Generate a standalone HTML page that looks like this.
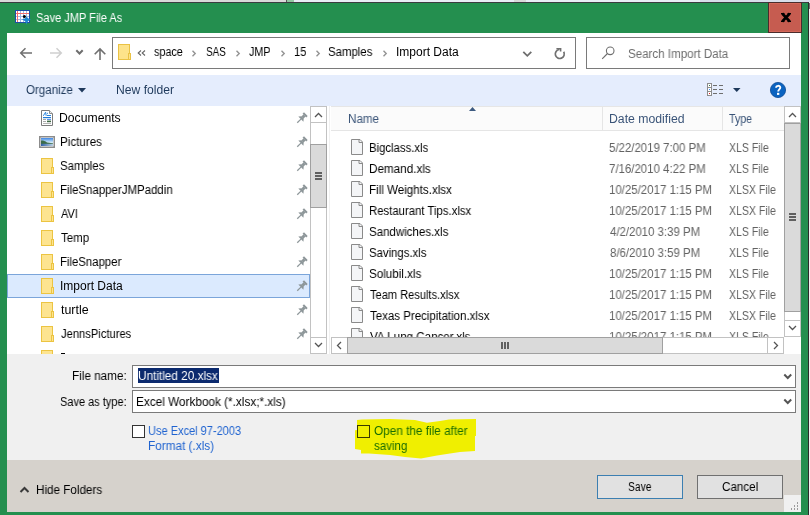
<!DOCTYPE html>
<html><head><meta charset="utf-8">
<style>
*{margin:0;padding:0;box-sizing:border-box}
html,body{width:810px;height:515px;overflow:hidden;background:#e9edf6;font-family:"Liberation Sans",sans-serif;font-size:12px;color:#000}
.a{position:absolute}
.t{position:absolute;white-space:nowrap;line-height:12px;font-size:12px;transform-origin:0 0;will-change:transform}
svg{position:absolute;overflow:visible}
.sb{position:absolute;background:#fff;border:1px solid #c2c2c2}
.thumb{position:absolute;background:#dadada;border:1px solid #a0a0a0}
</style></head><body>
<!-- top strip (background windows) -->
<div class="a" style="left:0;top:0;width:286px;height:2px;background:#d9d9d9"></div>
<div class="a" style="left:286px;top:0;width:1px;height:2px;background:#555"></div>
<div class="a" style="left:287px;top:0;width:7px;height:2px;background:#92c7a2"></div>
<div class="a" style="left:514px;top:0;width:12px;height:2px;background:#d9d9d9"></div>
<div class="a" style="left:700px;top:0;width:110px;height:2px;background:#d8deea"></div>
<!-- window frame -->
<div class="a" style="left:0;top:2px;width:809px;height:513px;background:#248f4f;border-top:1px solid #3b3b40;border-right:1px solid #2b2b2b"></div>
<div class="a" style="left:809px;top:2px;width:1px;height:513px;background:#f2f2f2"></div><div class="a" style="left:809px;top:3px;width:1px;height:6px;background:#707070"></div>
<!-- title icon -->
<svg style="left:15px;top:10px" width="15" height="13" viewBox="0 0 15 13">
  <rect x="0.5" y="0.5" width="14" height="12" fill="#fff" stroke="#1d4ea6"/>
  <g stroke="#9db8e6" stroke-width="1"><line x1="5.5" y1="1" x2="5.5" y2="12"/><line x1="8.5" y1="1" x2="8.5" y2="12"/><line x1="11.5" y1="1" x2="11.5" y2="12"/><line x1="1" y1="6.5" x2="14" y2="6.5"/><line x1="1" y1="9.5" x2="14" y2="9.5"/></g>
  <g stroke="#f26a6a" stroke-width="1"><line x1="2.5" y1="1" x2="2.5" y2="12"/><line x1="1" y1="3.5" x2="14" y2="3.5"/></g>
  <circle cx="9.4" cy="6.4" r="1.5" fill="#000"/>
  <path d="M6.9 9.4 Q10.8 8.6 11.6 6.4 Q12.4 8.6 16 9.4 Q12.4 10.2 11.6 14.8 Q10.8 10.2 6.9 9.4 Z" fill="#1e86cf"/>
</svg>
<!-- close button -->
<div class="a" style="left:768px;top:2px;width:34px;height:31px;background:#c65c50;border:1px solid #4a2c2c;box-shadow:inset 0 0 0 1px #d4685a"></div>
<svg style="left:781px;top:13px" width="10" height="9" viewBox="0 0 10 9"><path d="M1.2 0.5 L8.8 8.5 M8.8 0.5 L1.2 8.5" stroke="#000" stroke-width="2.6"/><path d="M0 0.5 H3.5 M6.5 0.5 H10 M0 8.5 H3.5 M6.5 8.5 H10" stroke="#000" stroke-width="1.2"/></svg>
<!-- content -->
<div class="a" style="left:7px;top:33px;width:794px;height:479px;background:#fff"></div>
<!-- nav buttons -->
<svg style="left:19px;top:47px" width="14" height="12" viewBox="0 0 14 12"><path d="M13 6 H2 M6.5 1.2 L1.7 6 L6.5 10.8" fill="none" stroke="#707070" stroke-width="1.5"/></svg>
<svg style="left:49px;top:47px" width="14" height="12" viewBox="0 0 14 12"><path d="M1 6 H12 M7.5 1.2 L12.3 6 L7.5 10.8" fill="none" stroke="#cfcfcf" stroke-width="1.5"/></svg>
<svg style="left:75px;top:49px" width="9" height="6" viewBox="0 0 9 6"><path d="M1.3 1.3 L4.5 4.5 L7.7 1.3" fill="none" stroke="#6e6e6e" stroke-width="2"/></svg>
<svg style="left:93px;top:47px" width="14" height="14" viewBox="0 0 14 14"><path d="M7 13 V2 M1.7 7.3 L7 2 L12.3 7.3" fill="none" stroke="#707070" stroke-width="1.6"/></svg>
<!-- address box -->
<div class="a" style="left:112px;top:37px;width:464px;height:32px;border:1px solid #7a7a7a"></div>
<svg style="left:118px;top:44px" width="14" height="16" viewBox="0 0 14 16">
  <rect x="0.5" y="0.5" width="11" height="15" fill="#fde38a" stroke="#eac244"/>
  <rect x="10.5" y="9.5" width="2" height="6" fill="#fde38a" stroke="#eac244"/>
</svg>
<svg style="left:137px;top:50px" width="9" height="6" viewBox="0 0 9 6"><path d="M4 0.5 L1.2 3 L4 5.5 M8 0.5 L5.2 3 L8 5.5" fill="none" stroke="#666" stroke-width="1.1"/></svg>
<svg style="left:191px;top:50px" width="6" height="7" viewBox="0 0 6 7"><path d="M1.5 0.8 L4.2 3.5 L1.5 6.2" fill="none" stroke="#939393" stroke-width="1.4"/></svg>
<svg style="left:235px;top:50px" width="6" height="7" viewBox="0 0 6 7"><path d="M1.5 0.8 L4.2 3.5 L1.5 6.2" fill="none" stroke="#939393" stroke-width="1.4"/></svg>
<svg style="left:280px;top:50px" width="6" height="7" viewBox="0 0 6 7"><path d="M1.5 0.8 L4.2 3.5 L1.5 6.2" fill="none" stroke="#939393" stroke-width="1.4"/></svg>
<svg style="left:315px;top:50px" width="6" height="7" viewBox="0 0 6 7"><path d="M1.5 0.8 L4.2 3.5 L1.5 6.2" fill="none" stroke="#939393" stroke-width="1.4"/></svg>
<svg style="left:382px;top:50px" width="6" height="7" viewBox="0 0 6 7"><path d="M1.5 0.8 L4.2 3.5 L1.5 6.2" fill="none" stroke="#939393" stroke-width="1.4"/></svg>
<svg style="left:522px;top:50px" width="11" height="8" viewBox="0 0 11 8"><path d="M1.3 1.8 L5.3 5.8 L9.3 1.8" fill="none" stroke="#6e6e6e" stroke-width="1.8"/></svg>
<svg style="left:553px;top:46px" width="14" height="14" viewBox="0 0 14 14"><path d="M10.7 5.75 A4.5 4.5 0 1 1 6.3 3.5" fill="none" stroke="#707070" stroke-width="1.7"/><path d="M3.4 2.7 H7.6 V5.4" fill="none" stroke="#707070" stroke-width="1.6"/></svg>
<!-- search box -->
<div class="a" style="left:586px;top:37px;width:204px;height:32px;border:1px solid #7a7a7a"></div>
<svg style="left:601px;top:46px" width="15" height="14" viewBox="0 0 15 14"><circle cx="9.2" cy="4.8" r="3.8" fill="none" stroke="#6e6e6e" stroke-width="1.1"/><path d="M6.5 7.5 L1.2 12.8" stroke="#6e6e6e" stroke-width="1.1"/></svg>
<!-- toolbar -->
<div class="a" style="left:7px;top:75px;width:794px;height:31px;background:#e5edfd"></div>
<svg style="left:78px;top:88px" width="8" height="5" viewBox="0 0 8 5"><path d="M0 0 H8 L4 4.5 Z" fill="#1e395b"/></svg>
<svg style="left:707px;top:83px" width="17" height="13" viewBox="0 0 17 13">
  <rect x="0.5" y="0.5" width="4" height="12" fill="#fff" stroke="#8c8c8c"/>
  <line x1="0.5" y1="4.5" x2="4.5" y2="4.5" stroke="#8c8c8c"/><line x1="0.5" y1="8.5" x2="4.5" y2="8.5" stroke="#8c8c8c"/>
  <rect x="2" y="2" width="1" height="1" fill="#3a7a4a"/><rect x="2" y="6" width="1" height="1" fill="#3d8ef0"/><rect x="2" y="10" width="1" height="1" fill="#e02020"/>
  <g stroke="#6e6e6e" stroke-width="1"><path d="M6 2.5 H10 M12 2.5 H16 M6 6.5 H10 M12 6.5 H16 M6 10.5 H10 M12 10.5 H16"/></g>
</svg>
<svg style="left:733px;top:88px" width="8" height="5" viewBox="0 0 8 5"><path d="M0 0 H7.5 L3.75 4 Z" fill="#1e395b"/></svg>
<svg style="left:770px;top:82px" width="16" height="16" viewBox="0 0 16 16"><circle cx="8" cy="8" r="7.6" fill="#0b63c0" stroke="#0c4a94" stroke-width="0.8"/><path d="M6.1 5.8 C6.1 3.2 10.3 3.2 10.3 5.6 C10.3 7.3 8.2 7.5 8.2 9.5" fill="none" stroke="#fff" stroke-width="1.9"/><rect x="7" y="10.8" width="2.3" height="2.1" fill="#fff"/></svg>

<!-- nav pane selection -->
<div class="a" style="left:7px;top:274px;width:303px;height:24px;background:#dbeafe;border:1px solid #7ba5da"></div>
<!-- nav icons -->
<svg style="left:41px;top:110px" width="13" height="16" viewBox="0 0 13 16">
  <path d="M0.5 0.5 H8.5 L11.5 3.5 V15.5 H0.5 Z" fill="#fff" stroke="#7c7c7c"/>
  <path d="M8.5 0.5 V3.5 H11.5" fill="#eee" stroke="#8c8c8c"/>
  <path d="M2.3 5.8 L4.6 2.2 L5.2 5.8" fill="none" stroke="#2a84dc" stroke-width="1"/>
  <rect x="6" y="2.8" width="1" height="1" fill="#2a84dc"/>
  <rect x="6" y="5" width="4" height="1" fill="#2a84dc"/>
  <rect x="2" y="7" width="8" height="1.2" fill="#1f7ad8"/>
  <rect x="2" y="9" width="3" height="1" fill="#a8a8a8"/><rect x="6" y="9" width="4" height="1" fill="#5b93e8"/>
  <rect x="2" y="11" width="3" height="1" fill="#a8a8a8"/><rect x="6" y="10.6" width="4" height="1.6" fill="#3f6a45"/>
  <rect x="2" y="13" width="8" height="1" fill="#b4b4b4"/>
</svg>
<svg style="left:39px;top:136px" width="16" height="12" viewBox="0 0 16 12">
  <defs><linearGradient id="sky" x1="0" y1="0" x2="0" y2="1"><stop offset="0" stop-color="#3f86e4"/><stop offset="0.55" stop-color="#d2eaf6"/></linearGradient>
  <linearGradient id="wat" x1="0" y1="0" x2="1" y2="0"><stop offset="0" stop-color="#2f5fa8"/><stop offset="1" stop-color="#b9d0e2"/></linearGradient></defs>
  <rect x="0.75" y="0.75" width="14.5" height="10.5" fill="#fff" stroke="#8c8c8c" stroke-width="1.5"/>
  <rect x="2" y="2" width="12" height="8" fill="url(#sky)"/>
  <path d="M2 4.6 C4 4.4 6 5 8 6.4 L14 7.2 V8 H2 Z" fill="#3c6c4a"/>
  <rect x="2" y="7.8" width="12" height="2.2" fill="url(#wat)"/>
</svg>
<svg style="left:41px;top:158px" width="13" height="16" viewBox="0 0 13 16"><defs></defs><rect x="0.5" y="0.5" width="11" height="15" fill="#fde490" stroke="#ecc442"/><rect x="10.5" y="9.5" width="2" height="6" fill="#fde490" stroke="#ecc442"/></svg>
<svg style="left:41px;top:182px" width="13" height="16" viewBox="0 0 13 16"><defs></defs><rect x="0.5" y="0.5" width="11" height="15" fill="#fde490" stroke="#ecc442"/><rect x="10.5" y="9.5" width="2" height="6" fill="#fde490" stroke="#ecc442"/></svg>
<svg style="left:41px;top:206px" width="13" height="16" viewBox="0 0 13 16"><defs></defs><rect x="0.5" y="0.5" width="11" height="15" fill="#fde490" stroke="#ecc442"/><rect x="10.5" y="9.5" width="2" height="6" fill="#fde490" stroke="#ecc442"/></svg>
<svg style="left:41px;top:230px" width="13" height="16" viewBox="0 0 13 16"><defs></defs><rect x="0.5" y="0.5" width="11" height="15" fill="#fde490" stroke="#ecc442"/><rect x="10.5" y="9.5" width="2" height="6" fill="#fde490" stroke="#ecc442"/></svg>
<svg style="left:41px;top:254px" width="13" height="16" viewBox="0 0 13 16"><defs></defs><rect x="0.5" y="0.5" width="11" height="15" fill="#fde490" stroke="#ecc442"/><rect x="10.5" y="9.5" width="2" height="6" fill="#fde490" stroke="#ecc442"/></svg>
<svg style="left:41px;top:278px" width="13" height="16" viewBox="0 0 13 16"><defs></defs><rect x="0.5" y="0.5" width="11" height="15" fill="#fde490" stroke="#ecc442"/><rect x="10.5" y="9.5" width="2" height="6" fill="#fde490" stroke="#ecc442"/></svg>
<svg style="left:41px;top:302px" width="13" height="16" viewBox="0 0 13 16"><defs></defs><rect x="0.5" y="0.5" width="11" height="15" fill="#fde490" stroke="#ecc442"/><rect x="10.5" y="9.5" width="2" height="6" fill="#fde490" stroke="#ecc442"/></svg>
<svg style="left:41px;top:326px" width="13" height="16" viewBox="0 0 13 16"><defs></defs><rect x="0.5" y="0.5" width="11" height="15" fill="#fde490" stroke="#ecc442"/><rect x="10.5" y="9.5" width="2" height="6" fill="#fde490" stroke="#ecc442"/></svg>
<svg style="left:41px;top:350px" width="13" height="16" viewBox="0 0 13 16"><defs></defs><rect x="0.5" y="0.5" width="11" height="15" fill="#fde490" stroke="#ecc442"/><rect x="10.5" y="9.5" width="2" height="6" fill="#fde490" stroke="#ecc442"/></svg>
<div class="a" style="left:61px;top:353px;width:4px;height:1px;background:#000"></div>
<!-- pins -->
<svg style="left:296px;top:112px" width="12" height="12" viewBox="0 0 12 12"><g transform="rotate(45 6 6)" fill="#8d9699"><rect x="3.4" y="0.6" width="5.2" height="2"/><rect x="4.5" y="2.5" width="3" height="2.6"/><path d="M4.5 5 L2.4 7.6 H9.6 L7.5 5 Z"/><rect x="5.4" y="7.5" width="1.2" height="5.2"/></g></svg>
<svg style="left:296px;top:136px" width="12" height="12" viewBox="0 0 12 12"><g transform="rotate(45 6 6)" fill="#8d9699"><rect x="3.4" y="0.6" width="5.2" height="2"/><rect x="4.5" y="2.5" width="3" height="2.6"/><path d="M4.5 5 L2.4 7.6 H9.6 L7.5 5 Z"/><rect x="5.4" y="7.5" width="1.2" height="5.2"/></g></svg>
<svg style="left:296px;top:160px" width="12" height="12" viewBox="0 0 12 12"><g transform="rotate(45 6 6)" fill="#8d9699"><rect x="3.4" y="0.6" width="5.2" height="2"/><rect x="4.5" y="2.5" width="3" height="2.6"/><path d="M4.5 5 L2.4 7.6 H9.6 L7.5 5 Z"/><rect x="5.4" y="7.5" width="1.2" height="5.2"/></g></svg>
<svg style="left:296px;top:184px" width="12" height="12" viewBox="0 0 12 12"><g transform="rotate(45 6 6)" fill="#8d9699"><rect x="3.4" y="0.6" width="5.2" height="2"/><rect x="4.5" y="2.5" width="3" height="2.6"/><path d="M4.5 5 L2.4 7.6 H9.6 L7.5 5 Z"/><rect x="5.4" y="7.5" width="1.2" height="5.2"/></g></svg>
<svg style="left:296px;top:208px" width="12" height="12" viewBox="0 0 12 12"><g transform="rotate(45 6 6)" fill="#8d9699"><rect x="3.4" y="0.6" width="5.2" height="2"/><rect x="4.5" y="2.5" width="3" height="2.6"/><path d="M4.5 5 L2.4 7.6 H9.6 L7.5 5 Z"/><rect x="5.4" y="7.5" width="1.2" height="5.2"/></g></svg>
<svg style="left:296px;top:232px" width="12" height="12" viewBox="0 0 12 12"><g transform="rotate(45 6 6)" fill="#8d9699"><rect x="3.4" y="0.6" width="5.2" height="2"/><rect x="4.5" y="2.5" width="3" height="2.6"/><path d="M4.5 5 L2.4 7.6 H9.6 L7.5 5 Z"/><rect x="5.4" y="7.5" width="1.2" height="5.2"/></g></svg>
<svg style="left:296px;top:256px" width="12" height="12" viewBox="0 0 12 12"><g transform="rotate(45 6 6)" fill="#8d9699"><rect x="3.4" y="0.6" width="5.2" height="2"/><rect x="4.5" y="2.5" width="3" height="2.6"/><path d="M4.5 5 L2.4 7.6 H9.6 L7.5 5 Z"/><rect x="5.4" y="7.5" width="1.2" height="5.2"/></g></svg>
<svg style="left:296px;top:280px" width="12" height="12" viewBox="0 0 12 12"><g transform="rotate(45 6 6)" fill="#8d9699"><rect x="3.4" y="0.6" width="5.2" height="2"/><rect x="4.5" y="2.5" width="3" height="2.6"/><path d="M4.5 5 L2.4 7.6 H9.6 L7.5 5 Z"/><rect x="5.4" y="7.5" width="1.2" height="5.2"/></g></svg>
<svg style="left:296px;top:304px" width="12" height="12" viewBox="0 0 12 12"><g transform="rotate(45 6 6)" fill="#8d9699"><rect x="3.4" y="0.6" width="5.2" height="2"/><rect x="4.5" y="2.5" width="3" height="2.6"/><path d="M4.5 5 L2.4 7.6 H9.6 L7.5 5 Z"/><rect x="5.4" y="7.5" width="1.2" height="5.2"/></g></svg>
<svg style="left:296px;top:328px" width="12" height="12" viewBox="0 0 12 12"><g transform="rotate(45 6 6)" fill="#8d9699"><rect x="3.4" y="0.6" width="5.2" height="2"/><rect x="4.5" y="2.5" width="3" height="2.6"/><path d="M4.5 5 L2.4 7.6 H9.6 L7.5 5 Z"/><rect x="5.4" y="7.5" width="1.2" height="5.2"/></g></svg>
<!-- left scrollbar -->
<div class="sb" style="left:310px;top:106px;width:17px;height:248px"></div>
<div class="a" style="left:310px;top:122px;width:17px;height:1px;background:#c2c2c2"></div>
<div class="a" style="left:310px;top:337px;width:17px;height:1px;background:#c2c2c2"></div>
<div class="thumb" style="left:310px;top:144px;width:17px;height:64px"></div>
<svg style="left:314px;top:112px" width="9" height="6" viewBox="0 0 9 6"><path d="M1 5 L4.5 1.5 L8 5" fill="none" stroke="#555" stroke-width="1.3"/></svg>
<svg style="left:314px;top:342px" width="9" height="6" viewBox="0 0 9 6"><path d="M1 1 L4.5 4.5 L8 1" fill="none" stroke="#555" stroke-width="1.3"/></svg>
<div class="a" style="left:315px;top:172px;width:7px;height:1.5px;background:#606060"></div>
<div class="a" style="left:315px;top:175px;width:7px;height:1.5px;background:#606060"></div>
<div class="a" style="left:315px;top:178px;width:7px;height:1.5px;background:#606060"></div>
<!-- splitter -->
<div class="a" style="left:329px;top:106px;width:1px;height:248px;background:#f0f0f0"></div>
<!-- header -->
<div class="a" style="left:331px;top:106px;width:453px;height:25px;background:#fbfbfb;border-top:1px solid #e6e6e6;border-bottom:1px solid #e5e5e5"></div>
<div class="a" style="left:602px;top:107px;width:1px;height:23px;background:#e5e5e5"></div>
<div class="a" style="left:722px;top:107px;width:1px;height:23px;background:#e5e5e5"></div>
<svg style="left:469px;top:107px" width="7" height="4" viewBox="0 0 7 4"><path d="M0 4 L3.5 0 L7 4 Z" fill="#3d5a80"/></svg>
<!-- file icons -->
<svg style="left:351px;top:139px" width="12" height="16" viewBox="0 0 12 16"><path d="M0.5 0.5 H9 L11.5 3 V15.5 H0.5 Z" fill="#f4f5f7" stroke="#8a8a8a"/><path d="M8 0.5 V3.5 H11.5" fill="none" stroke="#8a8a8a"/></svg>
<svg style="left:351px;top:160px" width="12" height="16" viewBox="0 0 12 16"><path d="M0.5 0.5 H9 L11.5 3 V15.5 H0.5 Z" fill="#f4f5f7" stroke="#8a8a8a"/><path d="M8 0.5 V3.5 H11.5" fill="none" stroke="#8a8a8a"/></svg>
<svg style="left:351px;top:181px" width="12" height="16" viewBox="0 0 12 16"><path d="M0.5 0.5 H9 L11.5 3 V15.5 H0.5 Z" fill="#f4f5f7" stroke="#8a8a8a"/><path d="M8 0.5 V3.5 H11.5" fill="none" stroke="#8a8a8a"/></svg>
<svg style="left:351px;top:202px" width="12" height="16" viewBox="0 0 12 16"><path d="M0.5 0.5 H9 L11.5 3 V15.5 H0.5 Z" fill="#f4f5f7" stroke="#8a8a8a"/><path d="M8 0.5 V3.5 H11.5" fill="none" stroke="#8a8a8a"/></svg>
<svg style="left:351px;top:223px" width="12" height="16" viewBox="0 0 12 16"><path d="M0.5 0.5 H9 L11.5 3 V15.5 H0.5 Z" fill="#f4f5f7" stroke="#8a8a8a"/><path d="M8 0.5 V3.5 H11.5" fill="none" stroke="#8a8a8a"/></svg>
<svg style="left:351px;top:244px" width="12" height="16" viewBox="0 0 12 16"><path d="M0.5 0.5 H9 L11.5 3 V15.5 H0.5 Z" fill="#f4f5f7" stroke="#8a8a8a"/><path d="M8 0.5 V3.5 H11.5" fill="none" stroke="#8a8a8a"/></svg>
<svg style="left:351px;top:265px" width="12" height="16" viewBox="0 0 12 16"><path d="M0.5 0.5 H9 L11.5 3 V15.5 H0.5 Z" fill="#f4f5f7" stroke="#8a8a8a"/><path d="M8 0.5 V3.5 H11.5" fill="none" stroke="#8a8a8a"/></svg>
<svg style="left:351px;top:286px" width="12" height="16" viewBox="0 0 12 16"><path d="M0.5 0.5 H9 L11.5 3 V15.5 H0.5 Z" fill="#f4f5f7" stroke="#8a8a8a"/><path d="M8 0.5 V3.5 H11.5" fill="none" stroke="#8a8a8a"/></svg>
<svg style="left:351px;top:307px" width="12" height="16" viewBox="0 0 12 16"><path d="M0.5 0.5 H9 L11.5 3 V15.5 H0.5 Z" fill="#f4f5f7" stroke="#8a8a8a"/><path d="M8 0.5 V3.5 H11.5" fill="none" stroke="#8a8a8a"/></svg>
<svg style="left:351px;top:328px" width="12" height="16" viewBox="0 0 12 16"><path d="M0.5 0.5 H9 L11.5 3 V15.5 H0.5 Z" fill="#f4f5f7" stroke="#8a8a8a"/><path d="M8 0.5 V3.5 H11.5" fill="none" stroke="#8a8a8a"/></svg>
<!-- right scrollbar -->
<div class="sb" style="left:784px;top:106px;width:17px;height:231px"></div>
<div class="a" style="left:784px;top:122px;width:17px;height:1px;background:#c2c2c2"></div>
<div class="a" style="left:784px;top:320px;width:17px;height:1px;background:#c2c2c2"></div>
<div class="thumb" style="left:784px;top:123px;width:17px;height:189px"></div>
<svg style="left:788px;top:112px" width="9" height="6" viewBox="0 0 9 6"><path d="M1 5 L4.5 1.5 L8 5" fill="none" stroke="#555" stroke-width="1.3"/></svg>
<svg style="left:788px;top:325px" width="9" height="6" viewBox="0 0 9 6"><path d="M1 1 L4.5 4.5 L8 1" fill="none" stroke="#555" stroke-width="1.3"/></svg>
<div class="a" style="left:789px;top:213px;width:7px;height:1.5px;background:#606060"></div>
<div class="a" style="left:789px;top:216px;width:7px;height:1.5px;background:#606060"></div>
<div class="a" style="left:789px;top:219px;width:7px;height:1.5px;background:#606060"></div>
<!-- list clip area for texts handled by overlay of scrollbars -->
<div class="t" style="left:35.88px;top:12px;color:#fff;transform:scaleX(0.9196)">Save JMP File As</div>
<div class="t" style="left:153.70px;top:46px;color:#000;transform:scaleX(0.9000)">space</div>
<div class="t" style="left:206.17px;top:46px;color:#000;transform:scaleX(0.8261)">SAS</div>
<div class="t" style="left:248.70px;top:46px;color:#000;transform:scaleX(0.8958)">JMP</div>
<div class="t" style="left:293.68px;top:46px;color:#000;transform:scaleX(0.9250)">15</div>
<div class="t" style="left:328.45px;top:46px;color:#000;transform:scaleX(0.9489)">Samples</div>
<div class="t" style="left:395.50px;top:46px;color:#000;transform:scaleX(0.9968)">Import Data</div>
<div class="t" style="left:627.74px;top:48px;color:#6d6d6d;transform:scaleX(0.9641)">Search Import Data</div>
<div class="t" style="left:25.50px;top:84px;color:#1e395b;transform:scaleX(0.9625)">Organize</div>
<div class="t" style="left:115.79px;top:84px;color:#1e395b;transform:scaleX(1.0107)">New folder</div>
<div class="t" style="left:59.48px;top:112px;color:#000;transform:scaleX(1.0169)">Documents</div>
<div class="t" style="left:59.53px;top:136px;color:#000;transform:scaleX(0.9667)">Pictures</div>
<div class="t" style="left:59.55px;top:160px;color:#000;transform:scaleX(0.9511)">Samples</div>
<div class="t" style="left:59.55px;top:184px;color:#000;transform:scaleX(0.9538)">FileSnapperJMPaddin</div>
<div class="t" style="left:60.50px;top:208px;color:#000;transform:scaleX(0.9176)">AVI</div>
<div class="t" style="left:60.50px;top:232px;color:#000;transform:scaleX(0.9552)">Temp</div>
<div class="t" style="left:59.55px;top:256px;color:#000;transform:scaleX(0.9469)">FileSnapper</div>
<div class="t" style="left:59.50px;top:280px;color:#000;transform:scaleX(1.0000)">Import Data</div>
<div class="t" style="left:60.50px;top:304px;color:#000;transform:scaleX(1.0346)">turtle</div>
<div class="t" style="left:60.50px;top:328px;color:#000;transform:scaleX(0.9320)">JennsPictures</div>
<div class="t" style="left:348.03px;top:113px;color:#3a5478;transform:scaleX(0.9710)">Name</div>
<div class="t" style="left:608.98px;top:113px;color:#3a5478;transform:scaleX(1.0208)">Date modified</div>
<div class="t" style="left:729.10px;top:113px;color:#3a5478;transform:scaleX(0.8885)">Type</div>
<div class="t" style="left:368.66px;top:142px;color:#000;transform:scaleX(0.9443)">Bigclass.xls</div>
<div class="t" style="left:609.35px;top:142px;color:#626262;transform:scaleX(0.9530)">5/22/2019 7:00 PM</div>
<div class="t" style="left:729.00px;top:142px;color:#626262;transform:scaleX(0.8756)">XLS File</div>
<div class="t" style="left:368.63px;top:163px;color:#000;transform:scaleX(0.9742)">Demand.xls</div>
<div class="t" style="left:609.35px;top:163px;color:#626262;transform:scaleX(0.9530)">7/16/2010 4:22 PM</div>
<div class="t" style="left:729.00px;top:163px;color:#626262;transform:scaleX(0.8756)">XLS File</div>
<div class="t" style="left:368.63px;top:184px;color:#000;transform:scaleX(0.9659)">Fill Weights.xlsx</div>
<div class="t" style="left:609.35px;top:184px;color:#626262;transform:scaleX(0.9538)">10/25/2017 1:15 PM</div>
<div class="t" style="left:729.00px;top:184px;color:#626262;transform:scaleX(0.8774)">XLSX File</div>
<div class="t" style="left:368.65px;top:205px;color:#000;transform:scaleX(0.9458)">Restaurant Tips.xlsx</div>
<div class="t" style="left:609.35px;top:205px;color:#626262;transform:scaleX(0.9538)">10/25/2017 1:15 PM</div>
<div class="t" style="left:729.00px;top:205px;color:#626262;transform:scaleX(0.8774)">XLSX File</div>
<div class="t" style="left:368.64px;top:226px;color:#000;transform:scaleX(0.9593)">Sandwiches.xls</div>
<div class="t" style="left:610.30px;top:226px;color:#626262;transform:scaleX(0.9511)">4/2/2010 3:39 PM</div>
<div class="t" style="left:729.00px;top:226px;color:#626262;transform:scaleX(0.8756)">XLS File</div>
<div class="t" style="left:368.65px;top:247px;color:#000;transform:scaleX(0.9458)">Savings.xls</div>
<div class="t" style="left:610.30px;top:247px;color:#626262;transform:scaleX(0.9511)">8/6/2010 3:59 PM</div>
<div class="t" style="left:729.00px;top:247px;color:#626262;transform:scaleX(0.8756)">XLS File</div>
<div class="t" style="left:368.63px;top:268px;color:#000;transform:scaleX(0.9698)">Solubil.xls</div>
<div class="t" style="left:609.35px;top:268px;color:#626262;transform:scaleX(0.9538)">10/25/2017 1:15 PM</div>
<div class="t" style="left:729.00px;top:268px;color:#626262;transform:scaleX(0.8756)">XLS File</div>
<div class="t" style="left:369.60px;top:289px;color:#000;transform:scaleX(0.9227)">Team Results.xlsx</div>
<div class="t" style="left:609.35px;top:289px;color:#626262;transform:scaleX(0.9538)">10/25/2017 1:15 PM</div>
<div class="t" style="left:729.00px;top:289px;color:#626262;transform:scaleX(0.8774)">XLSX File</div>
<div class="t" style="left:369.60px;top:310px;color:#000;transform:scaleX(0.9576)">Texas Precipitation.xlsx</div>
<div class="t" style="left:609.35px;top:310px;color:#626262;transform:scaleX(0.9538)">10/25/2017 1:15 PM</div>
<div class="t" style="left:729.00px;top:310px;color:#626262;transform:scaleX(0.8774)">XLSX File</div>
<div class="t" style="left:369.60px;top:331px;color:#000;transform:scaleX(0.9670)">VA Lung Cancer.xls</div>
<div class="t" style="left:609.35px;top:331px;color:#626262;transform:scaleX(0.9538)">10/25/2017 1:15 PM</div>
<div class="t" style="left:729.00px;top:331px;color:#626262;transform:scaleX(0.8756)">XLS File</div>
<!-- horizontal scrollbar (drawn after texts to clip) -->
<div class="sb" style="left:331px;top:337px;width:453px;height:17px"></div>
<div class="a" style="left:347px;top:337px;width:1px;height:17px;background:#c2c2c2"></div>
<div class="a" style="left:767px;top:337px;width:1px;height:17px;background:#c2c2c2"></div>
<div class="thumb" style="left:347px;top:337px;width:316px;height:17px"></div>
<svg style="left:336px;top:341px" width="6" height="9" viewBox="0 0 6 9"><path d="M5 1 L1.5 4.5 L5 8" fill="none" stroke="#555" stroke-width="1.3"/></svg>
<svg style="left:773px;top:341px" width="6" height="9" viewBox="0 0 6 9"><path d="M1 1 L4.5 4.5 L1 8" fill="none" stroke="#555" stroke-width="1.3"/></svg>
<div class="a" style="left:501px;top:342px;width:1.5px;height:7px;background:#606060"></div>
<div class="a" style="left:504px;top:342px;width:1.5px;height:7px;background:#606060"></div>
<div class="a" style="left:507px;top:342px;width:1.5px;height:7px;background:#606060"></div>
<div class="a" style="left:784px;top:337px;width:17px;height:17px;background:#fff"></div>
<!-- bottom panel -->
<div class="a" style="left:7px;top:354px;width:794px;height:106px;background:#f0f0f0"></div>
<div class="a" style="left:132px;top:365px;width:664px;height:23px;background:#fff;border:1px solid #7a7a7a"></div>
<div class="a" style="left:132px;top:390px;width:664px;height:23px;background:#fff;border:1px solid #7a7a7a"></div>
<div class="a" style="left:138px;top:368px;width:81px;height:15px;background:#0b2a6e"></div>
<svg style="left:783px;top:373px" width="10" height="8" viewBox="0 0 10 8"><path d="M1.3 1.5 L4.75 5 L8.2 1.5" fill="none" stroke="#555" stroke-width="2"/></svg>
<svg style="left:783px;top:398px" width="10" height="8" viewBox="0 0 10 8"><path d="M1.3 1.5 L4.75 5 L8.2 1.5" fill="none" stroke="#555" stroke-width="2"/></svg>
<!-- checkboxes -->
<div class="a" style="left:132px;top:425px;width:13px;height:13px;background:#fff;border:1px solid #333"></div>
<svg style="left:354px;top:418px" width="124" height="42" viewBox="0 0 124 42"><path d="M3.0 2.0 L8.0 1.5 L36.0 1.0 L61.0 2.0 L73.0 4.8 L86.0 3.0 L95.0 1.5 L122.0 1.0 L122.0 18.0 L121.0 18.0 L121.0 33.0 L106.0 34.0 L96.0 35.5 L83.0 37.5 L67.0 40.5 L51.0 39.0 L36.0 37.0 L15.0 35.5 L7.0 35.5 L7.0 32.0 L1.0 31.0 L1.0 12.3 L3.0 12.0 Z" fill="#f0ef00"/></svg>
<div class="a" style="left:357px;top:425px;width:13px;height:13px;background:#f0f000;border:1px solid #3a3a00"></div>
<!-- bottom bar -->
<div class="a" style="left:7px;top:460px;width:794px;height:52px;background:#d6d2cc"></div>
<svg style="left:19px;top:486px" width="11" height="8" viewBox="0 0 11 8"><path d="M1.5 6 L5.5 2 L9.5 6" fill="none" stroke="#3a3a3a" stroke-width="2"/></svg>
<div class="a" style="left:597px;top:475px;width:86px;height:24px;background:#e1e1e1;border:1px solid #3c7fb1"></div>
<div class="a" style="left:697px;top:475px;width:86px;height:24px;background:#e1e1e1;border:1px solid #707070"></div>
<div class="a" style="left:784px;top:495px;width:17px;height:17px;background:#f0f0f0"></div>
<svg style="left:790px;top:501px" width="10" height="10" viewBox="0 0 10 10"><g fill="#9a9a9a"><rect x="7" y="1" width="1" height="2"/><rect x="4" y="4" width="1" height="2"/><rect x="7" y="4" width="1" height="2"/><rect x="1" y="7" width="1" height="2"/><rect x="4" y="7" width="1" height="2"/><rect x="7" y="7" width="1" height="2"/></g></svg>
<div class="t" style="left:72.32px;top:370px;color:#000;transform:scaleX(0.9759)">File name:</div>
<div class="t" style="left:60.08px;top:396px;color:#000;transform:scaleX(0.9155)">Save as type:</div>
<div class="t" style="left:137.82px;top:370px;color:#fff;transform:scaleX(0.9812)">Untitled 20.xlsx</div>
<div class="t" style="left:135.52px;top:396px;color:#000;transform:scaleX(0.9815)">Excel Workbook (*.xlsx;*.xls)</div>
<div class="t" style="left:147.88px;top:425px;color:#1f63d0;transform:scaleX(0.9180)">Use Excel 97-2003</div>
<div class="t" style="left:147.82px;top:440px;color:#1f63d0;transform:scaleX(0.9818)">Format (.xls)</div>
<div class="t" style="left:373.80px;top:425px;color:#186c00;transform:scaleX(0.9812)">Open the file after</div>
<div class="t" style="left:373.80px;top:440px;color:#186c00;transform:scaleX(0.9618)">saving</div>
<div class="t" style="left:36.03px;top:484px;color:#000;transform:scaleX(0.9731)">Hide Folders</div>
<div class="t" style="left:627.84px;top:481px;color:#000;transform:scaleX(0.8577)">Save</div>
<div class="t" style="left:721.63px;top:481px;color:#000;transform:scaleX(0.9694)">Cancel</div>
</body></html>
